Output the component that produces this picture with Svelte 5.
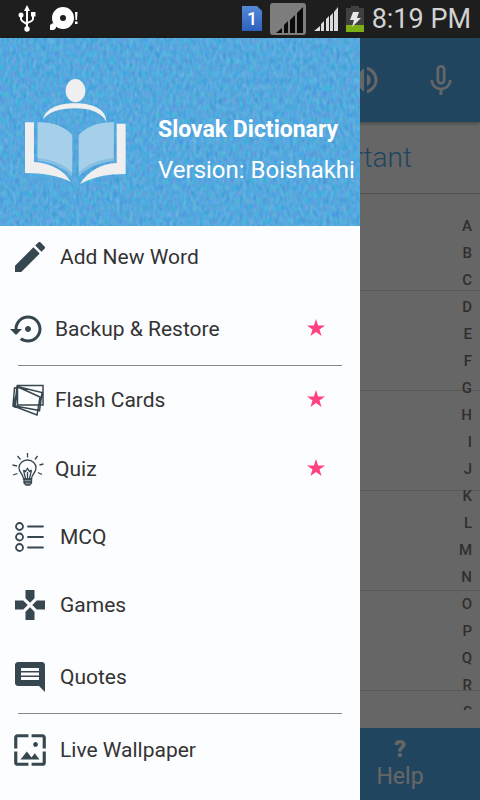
<script>
	const sections = [
		{
			name: 'words',
			items: [
				{ icon: 'edit', label: 'Add New Word' },
				{ icon: 'backup', label: 'Backup & Restore', compact: true, star: true }
			]
		},
		{
			name: 'practice',
			items: [
				{ icon: 'cards', label: 'Flash Cards', compact: true, star: true },
				{ icon: 'quiz', label: 'Quiz', compact: true, star: true },
				{ icon: 'mcq', label: 'MCQ' },
				{ icon: 'games', label: 'Games' },
				{ icon: 'quotes', label: 'Quotes' }
			]
		},
		{
			name: 'extras',
			items: [{ icon: 'wallpaper', label: 'Live Wallpaper' }]
		}
	]
	const letters = 'ABCDEFGHIJKLMNOPQRS'.split('')
</script>

<div class="phone">
	<div class="status">
		<div class="notices">
			<svg width="18" height="28" viewBox="0 0 18 28" fill="none" stroke="#fff" stroke-width="2">
				<path d="M9 4v19M3 10v4q0 2 6 5M15 9v5q0 2-6 4" />
				<path d="M9 0l3 6H6z" fill="#fff" stroke="none" />
				<circle cx="3" cy="10" r="2.5" fill="#fff" stroke="none" />
				<path d="M13 7h4.500v4.500H13z" fill="#fff" stroke="none" />
				<circle cx="9" cy="24" r="2.700" fill="#fff" stroke="none" />
			</svg>
			<svg width="28" height="24" viewBox="0 0 28 24" fill="#fff">
				<path fill-rule="evenodd" d="M13 0a11 11 0 1 0 0 22 11 11 0 0 0 0-22zm0 8a3 3 0 1 1 0 6 3 3 0 0 1 0-6z" />
				<path d="M0 18l3-2 3 2v3l-2 2H0zM25 5h2.500l-.500 8h-1.500zM25 14.500h2.500V17H25z" />
			</svg>
		</div>
		<div class="state">
			<svg width="20" height="26" viewBox="0 0 20 26">
				<defs>
					<linearGradient id="sim" x2="0" y2="1">
						<stop offset="0" stop-color="#5589d8" />
						<stop offset="1" stop-color="#2d60bd" />
					</linearGradient>
				</defs>
				<path d="M0 0h15l5 5v20H0z" fill="url(#sim)" />
				<text x="10" y="19" text-anchor="middle" class="sim">1</text>
			</svg>
			<svg width="36" height="32" viewBox="0 0 36 32">
				<rect width="36" height="32" rx="3" fill="#7d7d7d" />
				<path d="M6 30l6-5v5zM14 30v-8l4-4v12zM20 30V17l5-5v18zM27 30V10l6-6v26z" fill="#0b0b0b" />
			</svg>
			<svg width="24" height="24" viewBox="0 0 24 24" fill="#dcdcdc">
				<path d="M0 24l6-5v5zM7 24v-7l3-3v10zM12 24V12l3-3v15zM16 24V9l3-3v18zM20 24V5l4-5v24z" />
			</svg>
			<svg width="18" height="26" viewBox="0 0 18 26">
				<path d="M5 0h8v2h5v24H0V2h5z" fill="#404040" />
				<path d="M0 19h18v7H0z" fill="#7cae16" />
				<path d="M7 6h6l-2 6h4L6 21l2-7H4z" fill="#e8e8e8" />
			</svg>
			<time>8:19 PM</time>
		</div>
	</div>

	<div class="screen">
		<main>
			<header class="appbar">
				<button aria-label="Pronounce">
					<svg viewBox="0 0 24 24" fill="currentColor">
						<path d="M3 9v6h4l5 5V4L7 9H3zm13.500 3c0-1.770-1.020-3.290-2.500-4.030v8.050c1.480-.730 2.500-2.250 2.500-4.020zM14 3.230v2.060c2.890.860 5 3.540 5 6.710s-2.110 5.850-5 6.710v2.060c4.010-.910 7-4.490 7-8.770s-2.990-7.860-7-8.770z" />
					</svg>
				</button>
				<button aria-label="Voice search">
					<svg viewBox="0 0 24 24" fill="currentColor">
						<path d="M12 15c1.660 0 3-1.340 3-3V5c0-1.660-1.340-3-3-3S9 3.340 9 5v7c0 1.660 1.340 3 3 3zm-1.200-10.100c0-.660.540-1.200 1.200-1.200s1.200.540 1.200 1.200v7.200c0 .660-.530 1.200-1.200 1.200s-1.200-.540-1.200-1.200zM17.300 12c0 3-2.540 5.100-5.300 5.100S6.700 15 6.700 12H5c0 3.410 2.720 6.230 6 6.720V22h2v-3.280c3.280-.480 6-3.300 6-6.720z" />
					</svg>
				</button>
			</header>
			<nav class="tabs"><a href="#important">Important</a></nav>
			<div class="list">
				{#each Array(6) as _}
				<div class="entry"></div>
				{/each}
				<div class="index">
					{#each letters as letter}
					<a href="#{letter}">{letter}</a>
					{/each}
				</div>
			</div>
			<footer>
				<button class="help"><b>?</b><span>Help</span></button>
			</footer>
		</main>

		<div class="scrim"></div>

		<aside>
			<div class="banner">
				<svg class="grain" aria-hidden="true">
					<filter id="grain" x="0" y="0" width="100%" height="100%" color-interpolation-filters="sRGB">
						<feTurbulence type="fractalNoise" baseFrequency="0.3 0.15" numOctaves="2" seed="4" />
						<feColorMatrix values="0.3 0 0 0 0.18  0 0.2 0 0 0.56  0 0 0.12 0 0.81  0 0 0 0 1" />
					</filter>
					<rect width="100%" height="100%" filter="url(#grain)" />
				</svg>
				<svg class="logo" viewBox="75 114 304 320">
					<ellipse cx="227" cy="151" rx="30" ry="35" fill="#efefef" />
					<path d="M129 238C137 205 174 189 226 189s92 16 94 55C302 214 269 204 225 204c-46 0-78 10-96 34z" fill="#efefef" />
					<path d="M75 246h27v120c45 2 91 24 111 60-35-18-82-27-138-27zM351 251h27v151c-56 0-98 9-137 30 22-38 64-61 110-63z" fill="#efefef" />
					<path d="M113 246c45 0 82 12 104 39v124c-25-25-60-42-104-46zM342 246c-45 0-82 12-105 39v124c25-25 61-42 105-46z" fill="#86bfe2" />
					<path d="M113 246c45 0 82 12 104 39v112c-25-24-60-39-104-43zM342 246c-45 0-82 12-105 39v112c25-24 61-39 105-43z" fill="#a6d0ea" />
				</svg>
				<div class="about">
					<strong>Slovak Dictionary</strong>
					<span>Version: Boishakhi</span>
				</div>
			</div>

			<nav class="menu">
				{#each sections as section}
				<ul class={section.name}>
					{#each section.items as item}
					<li>
						<a class:compact={item.compact} href="#{item.icon}">
							<span class="icon">
								{#if item.icon === 'edit'}
								<svg width="40" height="40" viewBox="0 0 24 24" fill="currentColor">
									<path d="M3 17.250V21h3.750L17.810 9.940l-3.750-3.750L3 17.250zM20.710 7.040c.390-.390.390-1.020 0-1.410l-2.340-2.340c-.390-.390-1.020-.390-1.410 0l-1.830 1.830 3.750 3.750 1.830-1.830z" />
								</svg>
								{:else if item.icon === 'backup'}
								<svg width="36" height="36" viewBox="0 0 24 24" fill="currentColor">
									<path d="M14 12c0-1.100-.9-2-2-2s-2 .9-2 2 .9 2 2 2 2-.9 2-2zm-2-9c-4.970 0-9 4.030-9 9H0l4 4 4-4H5c0-3.870 3.130-7 7-7s7 3.130 7 7-3.130 7-7 7c-1.510 0-2.910-.490-4.060-1.300l-1.420 1.440C8.040 20.300 9.940 21 12 21c4.970 0 9-4.030 9-9s-4.030-9-9-9z" />
								</svg>
								{:else if item.icon === 'cards'}
								<svg width="32" height="32" viewBox="0 0 32 32" fill="none" stroke="currentColor" stroke-width="1.500">
									<path d="M5.500 1.500h25.500v19.500H5.500zM5 2.500l25 6-2.500 18L3 22zM6 3l22 10-3 18L1.500 22zM2.500 4L5.500 3 3 23 1 22z" />
								</svg>
								{:else if item.icon === 'quiz'}
								<svg width="32" height="33" viewBox="0 0 32 33" fill="none" stroke="currentColor" stroke-width="1.300">
									<path d="M11.500 26c0-5-4.500-6-4.500-11a8.500 8 0 0 1 17 0c0 5-4.500 6-4.500 11zM13.500 25.500L11.500 17M17.500 25.500l2-8.500M11.500 17l2 1.500 2-3 2 3 2-1.500M15.500 19v6" />
									<path d="M12 26h7.500v4l-2 2h-3.500L12 30zM12 29h7.500" fill="currentColor" fill-opacity=".6" />
									<path d="M15.500 0v4.500M5.500 3l3 3.500M25.500 3l-2.500 3.500M.500 12l4.500 1M27.500 12l4-1M1 22l4.500-1.500M26 19.500l4 2" />
								</svg>
								{:else if item.icon === 'mcq'}
								<svg width="30" height="30" viewBox="0 0 30 30" fill="none" stroke="currentColor" stroke-width="1.800">
									<circle cx="4.500" cy="4.500" r="3.500" />
									<circle cx="4.500" cy="15" r="3.500" />
									<circle cx="4.500" cy="25.500" r="3.500" />
									<path d="M13 4.500h15M13 15h15M13 25.500h15" stroke-linecap="round" />
								</svg>
								{:else if item.icon === 'games'}
								<svg width="36" height="36" viewBox="0 0 24 24" fill="currentColor">
									<path d="M15 7.500V2H9v5.500l3 3 3-3zM7.500 9H2v6h5.500l3-3-3-3zM9 16.500V22h6v-5.500l-3-3-3 3zM16.500 9l-3 3 3 3H22V9h-5.500z" />
								</svg>
								{:else if item.icon === 'quotes'}
								<svg width="36" height="36" viewBox="0 0 24 24" fill="currentColor">
									<path d="M21.990 4c0-1.100-.890-2-1.990-2H4c-1.100 0-2 .9-2 2v12c0 1.100.9 2 2 2h14l4 4-.010-18zM18 14H6v-2h12v2zm0-3H6V9h12v2zm0-3H6V6h12v2z" />
								</svg>
								{:else}
								<svg width="38" height="38" viewBox="0 0 24 24" fill="currentColor">
									<path d="M4 4h7V2H4c-1.100 0-2 .9-2 2v7h2V4zm6 9l-4 5h12l-3-4-2.030 2.710L10 13zm7-4.500c0-.830-.670-1.500-1.500-1.500S14 7.670 14 8.500s.670 1.500 1.500 1.500S17 9.330 17 8.500zM20 2h-7v2h7v7h2V4c0-1.100-.9-2-2-2zm0 18h-7v2h7c1.100 0 2-.9 2-2v-7h-2v7zM4 13H2v7c0 1.100.9 2 2 2h7v-2H4v-7z" />
								</svg>
								{/if}
							</span>
							<span class="label">{item.label}</span>
							{#if item.star}
							<svg class="star" viewBox="0 0 18 20" fill="#ff4081">
								<path d="M9 0l2.100 6.500H18l-5.500 4.100L14.600 17 9 13.100 3.400 17l2.100-6.400L0 6.500h6.900z" />
							</svg>
							{/if}
						</a>
					</li>
					{/each}
				</ul>
				{/each}
			</nav>
		</aside>
	</div>
</div>

<style>
	:global(body){
		margin: 0;
		background-color: #666;
	}
	.phone{
		display: flex;
		flex-direction: column;
		height: 100vh;
		overflow: hidden;
		font-family: Roboto, sans-serif;
	}
	svg{
		display: block;
		flex: none;
	}
	a{
		color: inherit;
		text-decoration: none;
	}
	button{
		padding: 0;
		border: 0;
		background: none;
		color: inherit;
		font: inherit;
	}
	.status{
		display: flex;
		flex: none;
		justify-content: space-between;
		align-items: center;
		height: 38px;
		padding: 0 9px 0 18px;
		background-color: #1e1e1e;
		color: #d2d2d2;
	}
	.notices, .state{
		display: flex;
		align-items: center;
	}
	.notices{
		gap: 14px;
	}
	.state{
		gap: 8px;
	}
	.sim{
		fill: #fff;
		font-size: 18px;
		font-weight: 500;
	}
	time{
		font-size: 27px;
		line-height: 38px;
	}
	.screen{
		position: relative;
		flex: 1;
		min-height: 0;
	}
	main{
		display: flex;
		flex-direction: column;
		height: 100%;
		background-color: #fff;
	}
	.appbar{
		display: flex;
		flex: none;
		justify-content: flex-end;
		align-items: center;
		gap: 41px;
		height: 84px;
		padding-right: 21px;
		background-color: #55adee;
		color: #fff;
		box-shadow: 0 1px 4px rgba(0, 0, 0, .4);
	}
	.appbar svg{
		width: 36px;
		height: 36px;
	}
	.tabs{
		display: flex;
		flex: none;
		justify-content: flex-end;
		padding-right: 68px;
		border-bottom: 1px solid #ccc;
		color: #55adee;
		font-size: 28px;
		font-weight: 300;
		line-height: 71px;
	}
	.list{
		position: relative;
		flex: 1;
		overflow: hidden;
	}
	.entry{
		box-sizing: border-box;
		height: 100px;
		border-bottom: 1px solid #ddd;
	}
	.entry:first-child{
		height: 97px;
	}
	.index{
		position: absolute;
		top: 19px;
		right: 8px;
		bottom: 18px;
		overflow: hidden;
		text-align: right;
		color: #777;
		font-size: 15px;
		font-weight: 500;
		line-height: 27px;
	}
	.index a{
		display: block;
	}
	footer{
		display: flex;
		flex: none;
		justify-content: flex-end;
		height: 72px;
		background-color: #55adee;
		color: #fff;
	}
	.help{
		display: flex;
		flex-direction: column;
		align-items: center;
		width: 160px;
		padding-top: 8px;
		font-size: 23px;
		line-height: 27px;
	}
	.help b{
		font-weight: 900;
	}
	.scrim{
		position: absolute;
		inset: 0;
		background-color: rgba(0, 0, 0, .6);
	}
	aside{
		position: absolute;
		top: 0;
		bottom: 0;
		left: 0;
		width: 75%;
		overflow: hidden;
		background-color: #fcfdff;
	}
	.banner{
		position: relative;
		display: flex;
		gap: 32px;
		box-sizing: border-box;
		height: 188px;
		padding-left: 25px;
		background-color: #52a9e0;
		color: #fff;
	}
	.grain{
		position: absolute;
		inset: 0;
		width: 100%;
		height: 100%;
	}
	.logo{
		position: relative;
		width: 101px;
		height: 107px;
		margin-top: 40px;
	}
	.about{
		position: relative;
		display: flex;
		flex-direction: column;
		padding-top: 72px;
		font-size: 23px;
		line-height: 40px;
		white-space: nowrap;
	}
	.about span{
		font-size: 24px;
	}
	ul{
		display: grid;
		margin: 0;
		padding: 0;
		list-style: none;
	}
	ul + ul::before{
		content: '';
		margin: 0 18px;
		background-color: #888;
	}
	.words{
		grid-template-rows: 62px 72px;
		row-gap: 5px;
	}
	.practice{
		grid-template-rows: 1px 68px 70px 66px 70px 73px;
	}
	.extras{
		grid-template-rows: 1px 72px;
	}
	li a{
		display: flex;
		align-items: center;
		gap: 10px;
		height: 100%;
		padding: 0 35px 0 10px;
		color: #333;
		font-size: 21px;
	}
	.icon{
		display: flex;
		flex: none;
		justify-content: center;
		width: 40px;
		color: #37474f;
	}
	.compact .icon{
		width: 36px;
	}
	.compact{
		gap: 9px;
	}
	.label{
		flex: 1;
	}
	.star{
		width: 18px;
		height: 20px;
	}
</style>
